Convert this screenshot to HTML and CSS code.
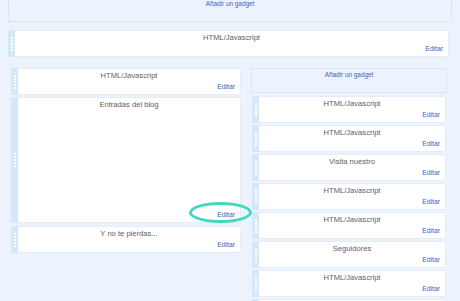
FILE: index.html
```html
<!DOCTYPE html>
<html lang="es">
<head>
    <meta charset="UTF-8">
    <meta name="viewport" content="width=device-width, initial-scale=1.0">
    <title>Diseño - Elementos de página</title>
    <link rel="stylesheet" href="styles.css">
</head>
<body>
    <div class="add-top">
        <a href="#">Añadir un gadget</a>
    </div>

    <div class="widget wide">
        <div class="handle"><span class="grip"></span></div>
        <div class="content">
            <div class="title">HTML/Javascript</div>
            <a class="edit" href="#">Editar</a>
        </div>
    </div>

    <div class="columns">
        <div class="main">
            <div class="widget">
                <div class="handle"><span class="grip"></span></div>
                <div class="content">
                    <div class="title">HTML/Javascript</div>
                    <a class="edit" href="#">Editar</a>
                </div>
            </div>
            <div class="widget tall">
                <div class="handle"><span class="grip"></span></div>
                <div class="content">
                    <div class="title">Entradas del blog</div>
                    <a class="edit" href="#">Editar</a>
                </div>
                <span class="highlight"></span>
            </div>
            <div class="widget">
                <div class="handle"><span class="grip"></span></div>
                <div class="content">
                    <div class="title">Y no te pierdas...</div>
                    <a class="edit" href="#">Editar</a>
                </div>
            </div>
        </div>

        <div class="sidebar">
            <div class="add-box">
                <a href="#">Añadir un gadget</a>
            </div>
            <div class="widget">
                <div class="handle"><span class="grip"></span></div>
                <div class="content">
                    <div class="title">HTML/Javascript</div>
                    <a class="edit" href="#">Editar</a>
                </div>
            </div>
            <div class="widget">
                <div class="handle"><span class="grip"></span></div>
                <div class="content">
                    <div class="title">HTML/Javascript</div>
                    <a class="edit" href="#">Editar</a>
                </div>
            </div>
            <div class="widget">
                <div class="handle"><span class="grip"></span></div>
                <div class="content">
                    <div class="title">Visita nuestro</div>
                    <a class="edit" href="#">Editar</a>
                </div>
            </div>
            <div class="widget">
                <div class="handle"><span class="grip"></span></div>
                <div class="content">
                    <div class="title">HTML/Javascript</div>
                    <a class="edit" href="#">Editar</a>
                </div>
            </div>
            <div class="widget">
                <div class="handle"><span class="grip"></span></div>
                <div class="content">
                    <div class="title">HTML/Javascript</div>
                    <a class="edit" href="#">Editar</a>
                </div>
            </div>
            <div class="widget">
                <div class="handle"><span class="grip"></span></div>
                <div class="content">
                    <div class="title">Seguidores</div>
                    <a class="edit" href="#">Editar</a>
                </div>
            </div>
            <div class="widget">
                <div class="handle"><span class="grip"></span></div>
                <div class="content">
                    <div class="title">HTML/Javascript</div>
                    <a class="edit" href="#">Editar</a>
                </div>
            </div>
            <!-- el siguiente gadget queda cortado por abajo -->
            <div class="widget">
                <div class="handle"><span class="grip"></span></div>
                <div class="content"></div>
            </div>
        </div>
    </div>
</body>
</html>
```

FILE: styles.css
```css
* {
    margin: 0;
    padding: 0;
    box-sizing: border-box;
}

body {
    background-color: #edf3fd;
    font-family: 'Liberation Sans', Arial, sans-serif;
    color: #5e5e5e;
    overflow: hidden;
    height: 301px;
}

a {
    text-decoration: none;
    color: #3b62c6;
}

.add-top {
    margin: 0 8px;
    height: 22px;
    border: 1px dotted #c8d6ee;
    border-top: none;
    text-align: center;
    font-size: 6.4px;
    line-height: 1;
    padding-top: 1px;
}

.widget {
    display: flex;
    height: 27px;
    margin-bottom: 2px;
    position: relative;
}

.widget.wide {
    margin: 8px 11px 11px 8px;
}

.handle {
    width: 7px;
    background-color: #d4e8fc;
    display: flex;
    align-items: center;
    justify-content: center;
    flex-shrink: 0;
    border-radius: 1px 0 0 1px;
}

/* puntos del asa para arrastrar */
.grip {
    width: 2px;
    height: 14px;
    background: repeating-linear-gradient(to bottom, #fff 0, #fff 2px, transparent 2px, transparent 3px);
}

.content {
    flex: 1;
    background-color: #fff;
    border: 1px solid #e3ecfb;
    border-left: none;
    border-radius: 0 2px 2px 0;
    display: flex;
    flex-direction: column;
    justify-content: space-between;
    padding: 2px 5px 3px 5px;
}

.title {
    text-align: center;
    font-size: 7.6px;
    line-height: 10px;
}

.edit {
    align-self: flex-end;
    font-size: 6.8px;
    line-height: 8px;
}

.columns {
    display: flex;
    gap: 10px;
    padding-left: 11px;
}

.main {
    width: 230px;
}

.main .widget.tall {
    height: 126px;
    margin-bottom: 3px;
}

.sidebar {
    width: 196px;
}

.sidebar .widget {
    margin-left: 1px;
    margin-right: 1px;
}

.add-box {
    height: 25px;
    border: 1px dotted #c8d6ee;
    text-align: center;
    font-size: 6.4px;
    line-height: 1;
    padding-top: 3px;
    margin-bottom: 3px;
}

.highlight {
    position: absolute;
    left: 178px;
    top: 105px;
    width: 63px;
    height: 21px;
    border: 3px solid #40d8bf;
    border-radius: 50%;
    pointer-events: none;
}
```
